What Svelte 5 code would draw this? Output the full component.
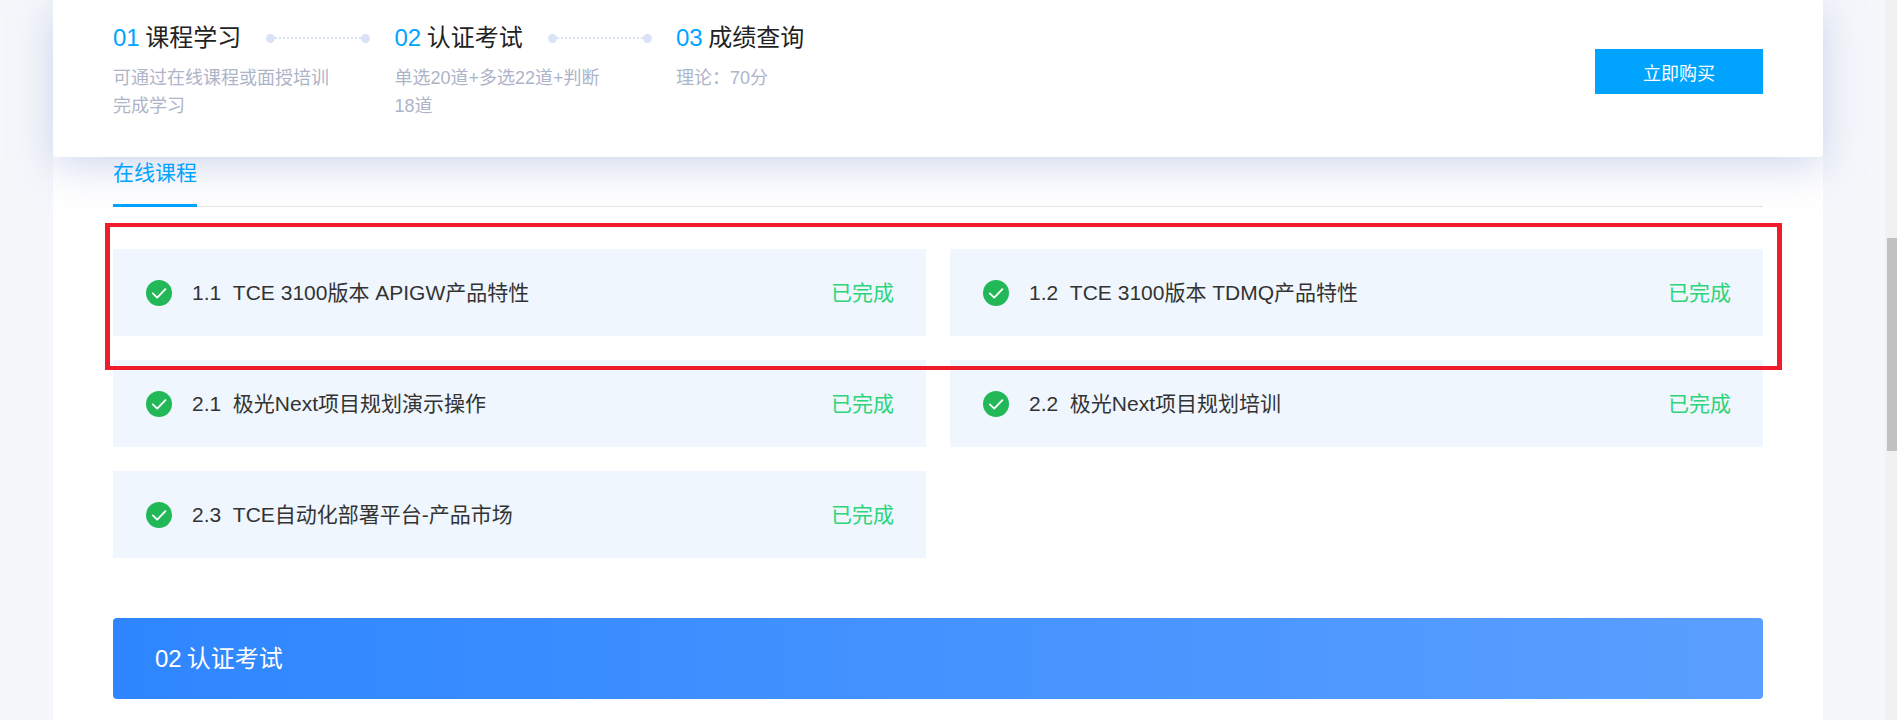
<script>
  const steps = [
    { no: '01', title: '课程学习', desc: '可通过在线课程或面授培训完成学习' },
    { no: '02', title: '认证考试', desc: '单选20道+多选22道+判断18道' },
    { no: '03', title: '成绩查询', desc: '理论\uFF1A70分' }
  ];
  const courses = [
    { no: '1.1', name: 'TCE 3100版本 APIGW产品特性' },
    { no: '1.2', name: 'TCE 3100版本 TDMQ产品特性' },
    { no: '2.1', name: '极光Next项目规划演示操作' },
    { no: '2.2', name: '极光Next项目规划培训' },
    { no: '2.3', name: 'TCE自动化部署平台-产品市场' }
  ];
</script>

<div class="page">
  <main class="main">
    <section class="summary">
      <div class="steps">
        {#each steps as step, i}
          <div class="step">
            <div class="step-head">
              <span class="step-title"><span class="step-no">{step.no}</span> {step.title}</span>
              {#if i < steps.length - 1}
                <span class="connector"><i></i><b></b><i></i></span>
              {/if}
            </div>
            <p class="step-desc">{step.desc}</p>
          </div>
        {/each}
      </div>
      <button class="buy">立即购买</button>
    </section>

    <div class="content">
      <div class="tabs"><span class="tab">在线课程</span></div>
      <div class="courses">
        {#each courses as course}
          <div class="course">
            <svg class="check" viewBox="0 0 26 26" aria-hidden="true">
              <circle cx="13" cy="13" r="13" fill="#22b858" />
              <path d="M6.8 13.4l4.4 4.2 8.2-8.4" fill="none" stroke="#fff" stroke-width="1.9" stroke-linecap="round" stroke-linejoin="round" />
            </svg>
            <span class="course-name">{course.no}&nbsp;&nbsp;{course.name}</span>
            <span class="done">已完成</span>
          </div>
        {/each}
      </div>
      <div class="banner">02 认证考试</div>
    </div>
  </main>
  <div class="scrollbar"><div class="thumb"></div></div>
  <div class="annotation"></div>
</div>

<style>
  :global(body) {
    margin: 0;
    font-family: "Liberation Sans", "Noto Sans CJK SC", sans-serif;
  }
  .page {
    position: relative;
    display: flex;
    height: 720px;
    overflow: hidden;
    background: #f5f7fb;
  }
  .main {
    width: 1770px;
    height: 720px;
    margin-left: 53px;
    margin-right: 62px;
    flex: none;
    background: #fff;
  }
  .summary {
    display: flex;
    justify-content: space-between;
    align-items: flex-start;
    box-sizing: border-box;
    height: 157px;
    padding: 0 60px;
    background: #fff;
    border-radius: 0 0 4px 4px;
    box-shadow: 0 10px 40px rgba(165, 180, 222, 0.5);
  }
  .steps {
    display: flex;
    padding-top: 22px;
  }
  .step {
    width: 281.5px;
  }
  .step-head {
    display: flex;
    align-items: center;
    height: 32px;
  }
  .step-title {
    font-size: 24px;
    line-height: 32px;
    color: #222;
    white-space: nowrap;
    word-spacing: -1px;
  }
  .step-no {
    color: #00a4ff;
  }
  .connector {
    display: flex;
    align-items: center;
    width: 104px;
    margin-left: 25px;
  }
  .connector i {
    flex: none;
    width: 9px;
    height: 9px;
    border-radius: 50%;
    background: #d9e3f5;
  }
  .connector b {
    flex: 1;
    border-top: 2px dotted #d9e3f5;
  }
  .step-desc {
    width: 222px;
    margin: 10px 0 0;
    font-size: 18px;
    line-height: 28px;
    color: #aeb4c8;
  }
  .buy {
    width: 168px;
    height: 45px;
    margin-top: 49px;
    padding: 0;
    border: 0;
    background: #00a4ff;
    color: #fff;
    font: inherit;
    font-size: 18px;
  }
  .content {
    padding: 0 60px;
  }
  .tabs {
    height: 50px;
    box-sizing: border-box;
    border-bottom: 1px solid #e4e4e4;
  }
  .tab {
    display: inline-block;
    box-sizing: border-box;
    height: 50px;
    padding-top: 3px;
    border-bottom: 3px solid #00a4ff;
    color: #00a4ff;
    font-size: 21px;
    line-height: 26px;
  }
  .courses {
    display: grid;
    grid-template-columns: 813px 813px;
    grid-auto-rows: 87px;
    gap: 24px;
    margin-top: 42px;
  }
  .course {
    display: flex;
    align-items: center;
    padding: 0 32px 0 33px;
    background: #eff6fe;
  }
  .check {
    width: 26px;
    height: 26px;
    flex: none;
    margin: 1px 20px 0 0;
  }
  .course-name {
    flex: 1;
    margin-bottom: 4px;
    font-size: 21px;
    color: #333;
  }
  .done {
    margin-bottom: 4px;
    font-size: 21px;
    color: #2ed47a;
  }
  .banner {
    height: 81px;
    margin-top: 60px;
    padding-left: 42px;
    border-radius: 4px;
    background: linear-gradient(90deg, #2e86ff, #5a9fff);
    color: #fff;
    font-size: 24px;
    line-height: 81px;
    word-spacing: -1.5px;
  }
  .scrollbar {
    flex: none;
    box-sizing: border-box;
    width: 12px;
    height: 720px;
    padding: 238px 0 0 2px;
    background: #f1f1f1;
  }
  .thumb {
    height: 213px;
    background: #c1c1c1;
  }
  .annotation {
    position: absolute;
    left: 105px;
    top: 223px;
    width: 1677px;
    height: 147px;
    box-sizing: border-box;
    border-style: solid;
    border-width: 4px 5px;
    border-color: #f01c2c;
    pointer-events: none;
  }
</style>
